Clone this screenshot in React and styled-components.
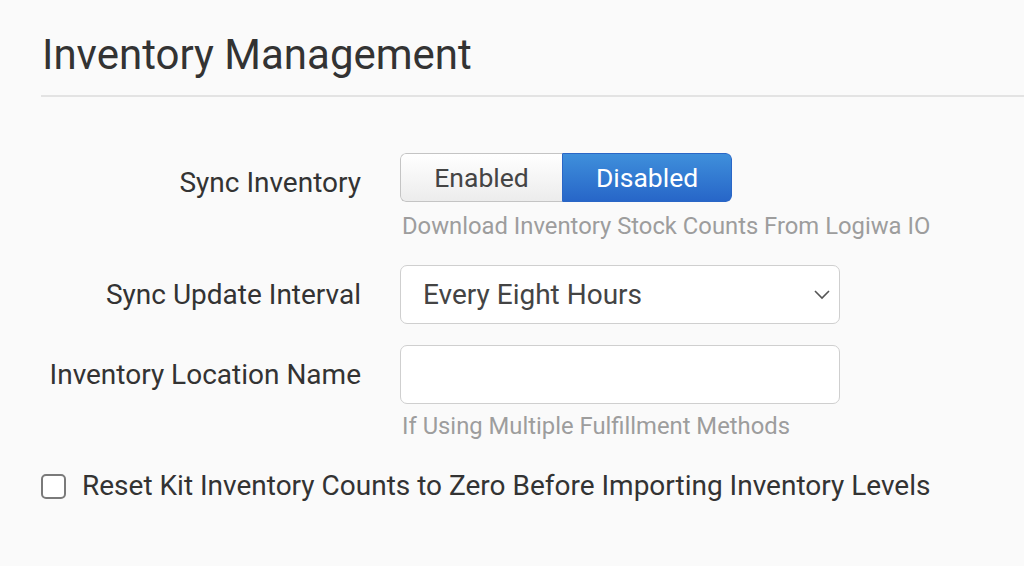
import React from "react";
import styled, { createGlobalStyle } from "styled-components";

const Global = createGlobalStyle`
  html, body { margin: 0; padding: 0; }
  body {
    background: #fafafa;
    font-family: Roboto, "Liberation Sans", Arial, sans-serif;
    color: #333;
    width: 1024px;
    height: 566px;
    overflow: hidden;
  }
  * { box-sizing: border-box; }
`;

const Page = styled.div`
  padding: 26px 0 0 41px;
`;

const Title = styled.h1`
  margin: 0 0 0 1px;
  font-weight: 400;
  font-size: 42px;
  line-height: 58px;
  color: #333;
`;

const Divider = styled.hr`
  border: 0;
  border-top: 2px solid #e3e3e3;
  margin: 11px 0 0 0;
`;

const Form = styled.div`
  display: flex;
  flex-direction: column;
  padding-top: 56px;
`;

const Row = styled.div`
  display: grid;
  grid-template-columns: 320px 440px;
  column-gap: 39px;
  margin-bottom: ${(p) => p.$mb || 0}px;
`;

const Label = styled.label`
  text-align: right;
  font-size: 28px;
  line-height: 32px;
  padding-top: ${(p) => p.$pt || 0}px;
  color: #333;
  white-space: nowrap;
`;

const Control = styled.div`
  display: flex;
  flex-direction: column;
`;

const Toggle = styled.div`
  display: flex;
  width: 332px;
  height: 49px;
  border-radius: 6px;
  overflow: hidden;
`;

const ToggleBtn = styled.button`
  flex: 0 0 ${(p) => p.$w}px;
  border: 1px solid ${(p) => (p.$active ? "#2a66c6" : "#c4c4c4")};
  border-right-width: ${(p) => (p.$active ? 1 : 0)}px;
  border-radius: ${(p) => (p.$active ? "0 6px 6px 0" : "6px 0 0 6px")};
  background: ${(p) =>
    p.$active
      ? "linear-gradient(#3f8fdb, #2766c8)"
      : "linear-gradient(#ffffff, #ececec)"};
  color: ${(p) => (p.$active ? "#fff" : "#444")};
  font-family: inherit;
  font-size: 26.5px;
  padding: 0;
  cursor: pointer;
`;

const Help = styled.div`
  color: #9d9d9d;
  font-size: 23.8px;
  line-height: 28px;
  white-space: nowrap;
  margin: ${(p) => p.$mt || 8}px 0 0 2px;
`;

const SelectBox = styled.div`
  position: relative;
  width: 440px;
  height: 59px;
  border: 1.5px solid #cfcfcf;
  border-radius: 7px;
  background: #fff;
  display: flex;
  align-items: center;
  padding-left: 22px;
  font-size: 28px;
  color: #444;
`;

const Chevron = styled.svg`
  position: absolute;
  right: 8px;
  top: 22px;
`;

const Input = styled.input`
  width: 440px;
  height: 59px;
  border: 1.5px solid #cfcfcf;
  border-radius: 7px;
  background: #fff;
  font-family: inherit;
  font-size: 28px;
  padding: 0 22px;
  outline: none;
`;

const CheckRow = styled.label`
  display: flex;
  align-items: center;
  gap: 16px;
  margin-top: 30px;
  font-size: 28px;
  line-height: 32px;
  color: #333;
`;

const Box = styled.span`
  width: 25px;
  height: 25px;
  border: 2px solid #7a7a7a;
  border-radius: 5px;
  background: #fff;
  flex: none;
`;

export default function App() {
  return (
    <>
      <Global />
      <Page>
        <Title>Inventory Management</Title>
        <Divider />
        <Form>
          <Row $mb={25}>
            <Label $pt={14}>Sync Inventory</Label>
            <Control>
              <Toggle>
                <ToggleBtn $w={162}>Enabled</ToggleBtn>
                <ToggleBtn $w={170} $active>Disabled</ToggleBtn>
              </Toggle>
              <Help $mt={10}>Download Inventory Stock Counts From Logiwa IO</Help>
            </Control>
          </Row>
          <Row $mb={21}>
            <Label $pt={14}>Sync Update Interval</Label>
            <Control>
              <SelectBox>
                Every Eight Hours
                <Chevron width="18" height="12" viewBox="0 0 18 12">
                  <path d="M2 3l7 7 7-7" fill="none" stroke="#555" strokeWidth="1.6" />
                </Chevron>
              </SelectBox>
            </Control>
          </Row>
          <Row>
            <Label $pt={14}>Inventory Location Name</Label>
            <Control>
              <Input />
              <Help $mt={8}>If Using Multiple Fulfillment Methods</Help>
            </Control>
          </Row>
          <CheckRow>
            <Box />
            Reset Kit Inventory Counts to Zero Before Importing Inventory Levels
          </CheckRow>
        </Form>
      </Page>
    </>
  );
}
